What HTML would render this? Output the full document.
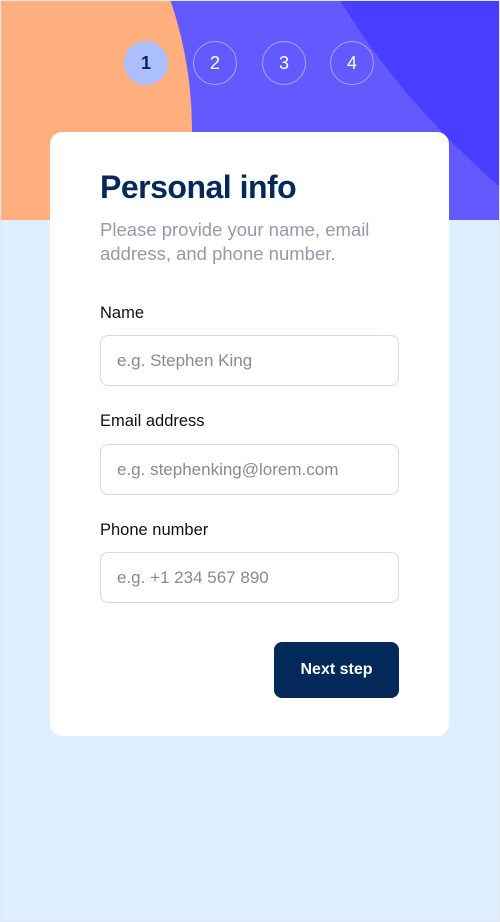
<!DOCTYPE html>
<html><head><meta charset="utf-8"><style>
*{box-sizing:border-box;margin:0;padding:0}
body{width:500px;height:922px;background:#deefff;font-family:"Liberation Sans",sans-serif;position:relative;overflow:hidden}
.frame{position:absolute;left:0;top:0;width:500px;height:922px;border:1px solid #e6e6ee;pointer-events:none}
svg.bg{position:absolute;left:0;top:0}
.step{position:absolute;top:41px;width:44px;height:44px;border-radius:50%;border:1px solid rgba(255,255,255,.45);color:#fff;font-size:18px;display:flex;align-items:center;justify-content:center}
.step.a{background:#adbeff;border-color:#adbeff;color:#02295a;font-weight:bold}
.card{position:absolute;left:50px;top:132px;width:399px;height:604px;background:#fff;border-radius:12px}
h1{position:absolute;left:50px;top:37px;font-size:32px;color:#02295a;letter-spacing:-0.5px}
.sub{position:absolute;left:50px;top:86px;width:310px;font-size:18.5px;line-height:24px;color:#9699ab}
label{position:absolute;left:50px;font-size:16.5px;color:#111}
.in{position:absolute;left:50px;width:299px;height:51px;border:1px solid #d6d9e6;border-radius:8px;padding-left:16px;display:flex;align-items:center;font-size:17px;color:#8a8a8a}
.btn{position:absolute;left:224px;top:510px;width:125px;height:56px;background:#02295a;color:#fff;border-radius:8px;font-weight:bold;font-size:16px;display:flex;align-items:center;justify-content:center}
</style></head><body>
<svg class="bg" width="500" height="220"><rect width="500" height="220" fill="#6259ff"/><path d="M340 0 Q400 100 500 187 L500 0Z" fill="#483eff"/><circle cx="-208" cy="130" r="400" fill="#ffaf7e"/></svg>
<div class="step a" style="left:124px">1</div>
<div class="step" style="left:193px">2</div>
<div class="step" style="left:262px">3</div>
<div class="step" style="left:330px">4</div>
<div class="card">
<h1>Personal info</h1>
<div class="sub">Please provide your name, email address, and phone number.</div>
<label style="top:172px">Name</label>
<div class="in" style="top:203px">e.g. Stephen King</div>
<label style="top:280px">Email address</label>
<div class="in" style="top:312px">e.g. stephenking@lorem.com</div>
<label style="top:389px">Phone number</label>
<div class="in" style="top:420px">e.g. +1 234 567 890</div>
<div class="btn">Next step</div>
</div>
<div class="frame"></div>
</body></html>
